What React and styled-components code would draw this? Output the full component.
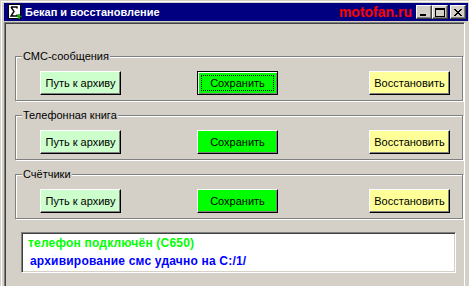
import React from 'react'
import styled, { createGlobalStyle } from 'styled-components'

const Global = createGlobalStyle`
    html, body {
        margin: 0;
        padding: 0;
        background: #d4d0c8;
    }
    body {
        font-family: "Liberation Sans", Arial, sans-serif;
    }
`

const Window = styled.div`
    width: 469px;
    height: 286px;
    box-sizing: border-box;
    overflow: hidden;
    background: #d4d0c8;
    padding: 3px 1px 0 4px;
    box-shadow: inset 1px 1px 0 #d4d0c8, inset 2px 2px 0 #ffffff;
`

const TitleBar = styled.div`
    height: 18px;
    background: #000080;
    display: flex;
    align-items: center;
    padding: 0 2px 0 4px;
`

const TitleText = styled.span`
    color: #ffffff;
    font-weight: bold;
    font-size: 11px;
    margin-left: 3px;
    flex: 1;
    white-space: nowrap;
`

const Brand = styled.span`
    color: #ff0000;
    font-weight: bold;
    font-size: 14px;
    margin-right: 4px;
`

const CaptionButton = styled.div`
    width: 16px;
    height: 14px;
    box-sizing: border-box;
    background: #d4d0c8;
    border: 1px solid;
    border-color: #ffffff #404040 #404040 #ffffff;
    box-shadow: inset -1px -1px 0 #808080;
    margin-left: ${p => p.$gap || 0}px;
    display: flex;
    align-items: center;
    justify-content: center;
`

const Client = styled.div`
    margin: 1px 3px 0 0;
    height: 300px;
    border: 1px solid;
    border-color: #808080 #ffffff #ffffff #808080;
    box-shadow: inset 1px 1px 0 #404040, inset -1px -1px 0 #d4d0c8;
    padding: 1px 0 0 1px;
`

const Group = styled.fieldset`
    box-sizing: border-box;
    width: 448px;
    margin: ${p => p.$top}px 0 0 9px;
    padding: 0;
    min-inline-size: 0;
    border: 1px solid #808080;
    box-shadow: inset 1px 1px 0 #ffffff, 1px 1px 0 #ffffff;
`

const Legend = styled.legend`
    font-size: 11px;
    line-height: 14px;
    color: #000000;
    background: #d4d0c8;
    padding: 0 1px;
    margin-left: 6px;
`

const Row = styled.div`
    display: flex;
    align-items: center;
    padding: 8px 0 5px 24px;
`

const tones = {
    path: '#ccffcc',
    save: '#00ff00',
    restore: '#ffff99'
}

const Button = styled.button`
    width: 81px;
    height: 24px;
    box-sizing: border-box;
    margin: 0 0 0 ${p => p.$offset || 0}px;
    padding: 0;
    font-family: "Liberation Sans", Arial, sans-serif;
    font-size: 11px;
    color: #000000;
    background: ${p => tones[p.$tone]};
    border: 1px solid;
    border-color: ${p => p.$default ? '#000000' : '#ffffff #000000 #000000 #ffffff'};
    box-shadow: ${p => p.$default
        ? 'inset 1px 1px 0 #ffffff, inset -1px -1px 0 #808080'
        : 'inset -1px -1px 0 #808080'};
    position: relative;
    outline: none;

    ${p => p.$default && `
        &::after {
            content: '';
            position: absolute;
            inset: 3px;
            border: 1px dotted #000000;
        }
    `}
`

const Log = styled.div`
    box-sizing: border-box;
    width: 435px;
    height: 41px;
    margin: 13px 0 0 15px;
    background: #ffffff;
    border: 1px solid;
    border-color: #808080 #ffffff #ffffff #808080;
    box-shadow: inset 1px 1px 0 #404040, inset -1px -1px 0 #d4d0c8;
    padding: 1px 0 0 6px;
`

const LogLine = styled.div`
    font-weight: bold;
    font-size: 12px;
    line-height: 18px;
    letter-spacing: 0.2px;
    color: ${p => p.$color};
    padding-left: ${p => p.$indent || 0}px;
    white-space: nowrap;
`

const AppIcon = () => (
    <svg width="14" height="16" viewBox="0 0 14 16">
        <rect x="0.5" y="0.5" width="12" height="14" fill="#ffffff" stroke="#000000" />
        <path d="M3 3 H9 V4.5 M3 3 L6 7.5 L3 12 H9 V10.5" fill="none" stroke="#000000" strokeWidth="1.4" />
        <path d="M11 10 V15 M8.5 12.5 H13.5" stroke="#00a000" strokeWidth="1.6" />
    </svg>
)

const groups = [
    { title: 'СМС-сообщения', top: 25, focused: true },
    { title: 'Телефонная книга', top: 7 },
    { title: 'Счётчики', top: 7 }
]

const App = () => (
    <>
        <Global />
        <Window>
            <TitleBar>
                <AppIcon />
                <TitleText>Бекап и восстановление</TitleText>
                <Brand>motofan.ru</Brand>
                <CaptionButton>
                    <svg width="10" height="9" viewBox="0 0 10 9">
                        <rect x="1" y="6" width="6" height="2" fill="#000" />
                    </svg>
                </CaptionButton>
                <CaptionButton>
                    <svg width="10" height="9" viewBox="0 0 10 9">
                        <rect x="0.5" y="0.5" width="9" height="8" fill="none" stroke="#000" />
                        <rect x="0" y="0" width="10" height="2" fill="#000" />
                    </svg>
                </CaptionButton>
                <CaptionButton $gap={2}>
                    <svg width="10" height="9" viewBox="0 0 10 9">
                        <path d="M1 1 L8 8 M2 1 L9 8 M8 1 L1 8 M9 1 L2 8" stroke="#000" strokeWidth="1" />
                    </svg>
                </CaptionButton>
            </TitleBar>
            <Client>
                {groups.map(g => (
                    <Group key={g.title} $top={g.top}>
                        <Legend>{g.title}</Legend>
                        <Row>
                            <Button $tone="path">Путь к архиву</Button>
                            <Button $tone="save" $offset={76} $default={g.focused}>Сохранить</Button>
                            <Button $tone="restore" $offset={91}>Восстановить</Button>
                        </Row>
                    </Group>
                ))}
                <Log>
                    <LogLine $color="#00ff00">телефон подключён (С650)</LogLine>
                    <LogLine $color="#0000ff" $indent={2}>архивирование смс удачно на C:/1/</LogLine>
                </Log>
            </Client>
        </Window>
    </>
)

export default App
